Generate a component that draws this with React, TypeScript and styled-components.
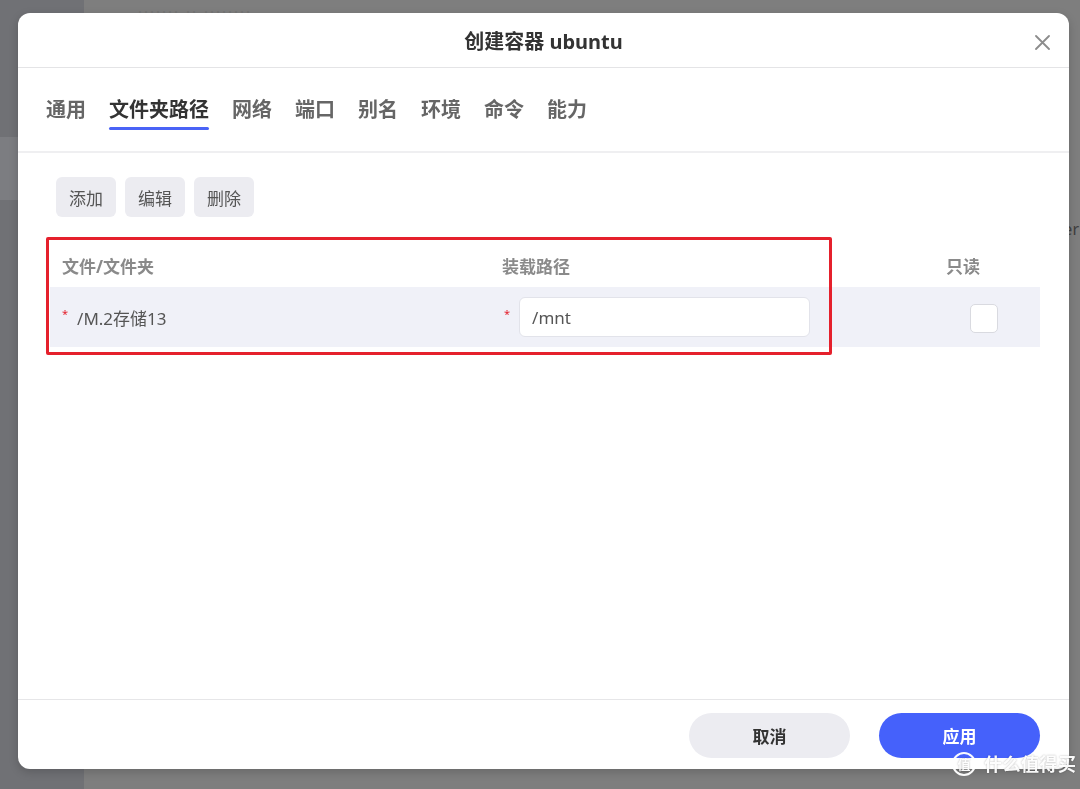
import React from "react";
import styled, { createGlobalStyle } from "styled-components";

const GlobalStyle = createGlobalStyle`
  html, body { margin: 0; padding: 0; }
  body {
    font-family: "Noto Sans", "Noto Sans CJK SC", sans-serif;
    background: #7e7e7e;
  }
  #root { width: 1080px; height: 789px; overflow: hidden; position: relative; }
  * { box-sizing: border-box; }
`;

/* ---------- underlying page (dimmed) ---------- */
const Page = styled.div`
  display: flex;
  width: 1080px;
  height: 789px;
  background: #7e7e7e;
`;

const Sidebar = styled.div`
  width: 84px;
  background: #707175;
  display: flex;
  flex-direction: column;
  padding-top: 137px;
`;

const SideItem = styled.div`
  height: 63px;
  background: #7c7d81;
`;

const Main = styled.div`
  flex: 1;
  display: flex;
  flex-direction: column;
  overflow: hidden;
`;

const GhostText = styled.div`
  padding: 2px 0 0 54px;
  font-size: 15px;
  line-height: 18px;
  color: #747474;
  letter-spacing: 2px;
`;

const GhostRow = styled.div`
  margin-top: 198px;
  display: flex;
  justify-content: flex-end;
  padding-right: 1px;
  font-size: 16px;
  color: #3f3f3f;
`;

/* ---------- modal ---------- */
const Overlay = styled.div`
  position: fixed;
  inset: 0;
  padding: 13px 0 0 18px;
`;

const Dialog = styled.div`
  width: 1051px;
  height: 756px;
  background: #fff;
  border-radius: 12px;
  box-shadow: 0 3px 10px rgba(0, 0, 0, 0.18);
  display: flex;
  flex-direction: column;
  overflow: hidden;
`;

const Header = styled.div`
  height: 55px;
  border-bottom: 1px solid #e4e4e6;
  display: grid;
  grid-template-columns: 1fr auto 1fr;
  align-items: center;
  padding: 4px 19px 0 19px;
`;

const Title = styled.div`
  grid-column: 2;
  font-size: 20px;
  font-weight: 700;
  color: #333;
  line-height: 24px;
`;

const CloseButton = styled.button`
  justify-self: end;
  width: 15px;
  height: 15px;
  padding: 0;
  border: none;
  background: none;
  display: flex;
  cursor: pointer;
`;

const TabBar = styled.div`
  height: 85px;
  border-bottom: 2px solid #efeff1;
  display: flex;
  align-items: flex-start;
  gap: 23px;
  padding: 28px 0 0 28px;
`;

const Tab = styled.div`
  display: flex;
  flex-direction: column;
  cursor: pointer;
`;

const TabLabel = styled.span<{ $active?: boolean }>`
  font-size: 20px;
  line-height: 28px;
  font-weight: 700;
  color: ${(p) => (p.$active ? "#333" : "#666")};
`;

const TabLine = styled.span<{ $active?: boolean }>`
  margin-top: 3px;
  height: 3px;
  border-radius: 2px;
  background: ${(p) => (p.$active ? "#4a63f6" : "transparent")};
`;

const Content = styled.div`
  flex: 1;
  padding: 24px 29px 0 32px;
  display: flex;
  flex-direction: column;
`;

const Toolbar = styled.div`
  display: flex;
  gap: 9px;
  padding-left: 6px;
`;

const ToolButton = styled.button`
  width: 60px;
  height: 40px;
  border: none;
  border-radius: 6px;
  background: #ececf1;
  font-family: inherit;
  font-size: 17px;
  color: #555;
  padding: 0;
  cursor: pointer;
`;

const TableWrap = styled.div`
  position: relative;
  margin-top: 20px;
`;

const GridRow = styled.div`
  display: grid;
  grid-template-columns: 440px 444px 1fr;
`;

const HeaderRow = styled(GridRow)`
  height: 50px;
  align-items: end;
  padding-bottom: 8px;
`;

const HeaderCell = styled.div`
  padding-left: 12px;
  font-size: 17px;
  line-height: 24px;
  font-weight: 700;
  color: #8a8a8a;
`;

const DataRow = styled(GridRow)`
  height: 60px;
  background: #f0f1f8;
  align-items: center;
`;

const Cell = styled.div<{ $pad: number }>`
  display: flex;
  align-items: center;
  padding-left: ${(p) => p.$pad}px;
  font-size: 17px;
  color: #555;
`;

const Required = styled.span`
  color: #e4212d;
  font-size: 11px;
  line-height: 20px;
  margin-top: -6px;
  margin-right: 9px;
`;

const PathInput = styled.input`
  width: 291px;
  height: 40px;
  border: 1px solid #e2e3ea;
  border-radius: 6px;
  padding: 0 12px;
  font-family: inherit;
  font-size: 17px;
  color: #555;
  background: #fff;
  outline: none;
`;

const CheckBox = styled.span`
  display: block;
  width: 28px;
  height: 29px;
  border: 1px solid #d9dae0;
  border-radius: 5px;
  background: #fff;
  margin-top: 3px;
`;

const Highlight = styled.div`
  position: absolute;
  left: -4px;
  top: 0;
  width: 786px;
  height: 118px;
  border: 3px solid #e5202c;
  border-radius: 2px;
  pointer-events: none;
`;

const Footer = styled.div`
  height: 70px;
  border-top: 1px solid #e6e6e8;
  display: flex;
  justify-content: flex-end;
  align-items: flex-start;
  gap: 29px;
  padding: 13px 29px 0 0;
`;

const FooterButton = styled.button<{ $primary?: boolean }>`
  width: 161px;
  height: 45px;
  border: none;
  border-radius: 23px;
  font-family: inherit;
  font-size: 17px;
  font-weight: 700;
  cursor: pointer;
  background: ${(p) => (p.$primary ? "#4561fb" : "#ececf1")};
  color: ${(p) => (p.$primary ? "#fff" : "#333")};
`;

const Watermark = styled.div`
  position: fixed;
  left: 952px;
  top: 752px;
  display: flex;
  align-items: center;
  gap: 8px;
  color: rgba(255, 255, 255, 0.96);
  text-shadow: 0 0 2px rgba(0, 0, 0, 0.3);
`;

const WmBadge = styled.span`
  width: 24px;
  height: 24px;
  border-radius: 50%;
  border: 2px solid rgba(255, 255, 255, 0.96);
  display: flex;
  align-items: center;
  justify-content: center;
  font-size: 13px;
  font-weight: 700;
  line-height: 1;
`;

const WmText = styled.span`
  font-size: 18px;
  font-weight: 700;
  letter-spacing: 0.5px;
  line-height: 24px;
`;

const tabs = ["通用", "文件夹路径", "网络", "端口", "别名", "环境", "命令", "能力"];

export default function App() {
  return (
    <>
      <GlobalStyle />
      <Page>
        <Sidebar>
          <SideItem />
        </Sidebar>
        <Main>
          <GhostText>······· ·· ········</GhostText>
          <GhostRow>er</GhostRow>
        </Main>
      </Page>
      <Overlay>
        <Dialog>
          <Header>
            <Title>创建容器 ubuntu</Title>
            <CloseButton aria-label="关闭">
              <svg width="15" height="15" viewBox="0 0 15 15">
                <path d="M1 1 L14 14 M14 1 L1 14" stroke="#8c8c8c" strokeWidth="1.8" strokeLinecap="round" />
              </svg>
            </CloseButton>
          </Header>
          <TabBar>
            {tabs.map((t) => (
              <Tab key={t}>
                <TabLabel $active={t === "文件夹路径"}>{t}</TabLabel>
                <TabLine $active={t === "文件夹路径"} />
              </Tab>
            ))}
          </TabBar>
          <Content>
            <Toolbar>
              <ToolButton>添加</ToolButton>
              <ToolButton>编辑</ToolButton>
              <ToolButton>删除</ToolButton>
            </Toolbar>
            <TableWrap>
              <HeaderRow>
                <HeaderCell>文件/文件夹</HeaderCell>
                <HeaderCell>装载路径</HeaderCell>
                <HeaderCell>只读</HeaderCell>
              </HeaderRow>
              <DataRow>
                <Cell $pad={12}>
                  <Required>*</Required>
                  /M.2存储13
                </Cell>
                <Cell $pad={14}>
                  <Required>*</Required>
                  <PathInput defaultValue="/mnt" />
                </Cell>
                <Cell $pad={36}>
                  <CheckBox />
                </Cell>
              </DataRow>
              <Highlight />
            </TableWrap>
          </Content>
          <Footer>
            <FooterButton>取消</FooterButton>
            <FooterButton $primary>应用</FooterButton>
          </Footer>
        </Dialog>
      </Overlay>
      <Watermark>
        <WmBadge>值</WmBadge>
        <WmText>什么值得买</WmText>
      </Watermark>
    </>
  );
}
